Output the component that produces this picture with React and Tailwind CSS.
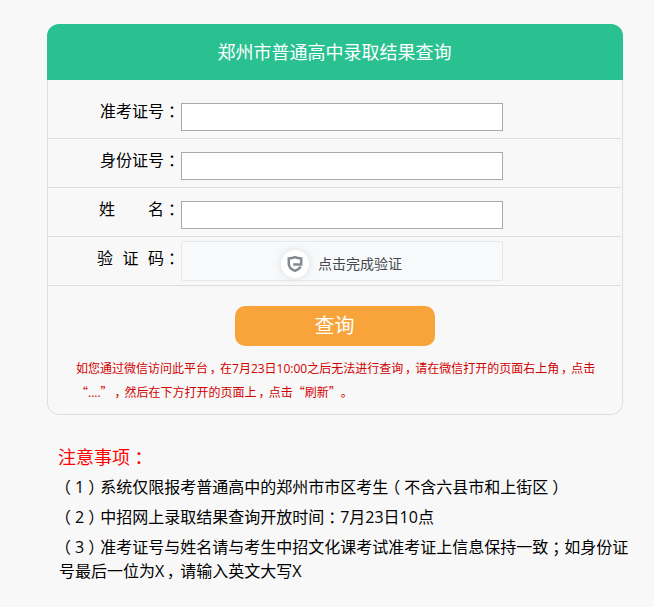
import React from 'react';

// Full-width punctuation, placed in a cell of one em.
const Mark = ({ children, className = 'text-center' }) => (
  <span className={`inline-block w-[1em] font-['Noto_Sans_CJK_SC',sans-serif] leading-none [font-feature-settings:'halt'] ${className}`}>{children}</span>
);

const Comma = () => <Mark className="pl-[0.15em] text-left">，</Mark>;

function Row({ label, width, height = 'h-[49px]', children }) {
  return (
    <div className={`mr-px flex items-end border-b border-[#dddddd] ${height}`}>
      <div className="mb-[15px] flex h-6 w-[132px] justify-end text-[16px] leading-6 whitespace-nowrap">
        <span className={`flex justify-between ${width}`}>
          {label.map((part) => <span key={part}>{part}</span>)}
        </span>
        <span className="w-4"><Mark>：</Mark></span>
      </div>
      {children}
    </div>
  );
}

const Field = () => (
  <input className="mb-[7px] ml-px h-7 w-[322px] border border-[#a9a9a9] bg-white px-1 outline-none" />
);

export default function App() {
  return (
    <div className="h-[607px] w-[654px] overflow-hidden bg-[#f8f8f8] pt-6 font-['Open_Sans','Noto_Sans_CJK_SC',sans-serif] text-black">
      <section className="ml-[47px] h-[391px] w-[576px] overflow-hidden rounded-xl">
        <h1 className="h-14 bg-[#2ac191] pr-px text-center text-[18px] leading-[56px] text-white">郑州市普通高中录取结果查询</h1>
        <div className="h-[335px] rounded-b-xl border border-t-0 border-[#dddddd] bg-[#f8f8f8]">
          <Row label={['准考证号']} width="w-16" height="h-[59px]"><Field /></Row>
          <Row label={['身份证号']} width="w-16"><Field /></Row>
          <Row label={['姓', '名']} width="w-[65px]"><Field /></Row>
          <Row label={['验', '证', '码']} width="w-[67px]">
            <div className="mb-1 ml-px flex h-10 w-[322px] items-center rounded-[2px] border border-[#e4e7eb] bg-[#f7f9fa] pt-[5px] pl-[99px] text-[14px] text-[#45494c]">
              <span className="flex size-7 items-center justify-center rounded-full bg-white shadow-[0_0_7px_1px_#dfe3e6]">
                <svg className="mr-px h-[18px] w-4" viewBox="0 0 16 18" fill="none" stroke="#848a92" strokeWidth="2.5">
                  <path d="M6.2 9.4H14.2V3.4C12 3.3 10 3 8 2.2 6 3 4 3.3 1.8 3.4V9c0 3.2 2.6 5.4 6.2 6.9 2.9-1.2 4.8-2.6 5.7-4.3" />
                </svg>
              </span>
              <span className="ml-[9px]">点击完成验证</span>
            </div>
          </Row>
          <button className="mt-5 ml-[187px] block h-10 w-[200px] rounded-[10px] bg-[#f9a43a] pr-px text-[20px] leading-10 text-white">查询</button>
          <p className="mt-[11px] ml-7 text-[12px] leading-6 whitespace-nowrap text-[#d10000]">
            如您通过微信访问此平台<Comma />在7月23日10:00之后无法进行查询<Comma />请在微信打开的页面右上角<Comma />点击<br />
            <Mark className="text-right">“</Mark>....<Mark className="text-left">”</Mark><Comma />然后在下方打开的页面上<Comma />点击<Mark className="text-right">“</Mark>刷新<Mark className="text-left">”</Mark><Mark className="text-left">。</Mark>
          </p>
        </div>
      </section>
      <section className="mt-[29px] ml-[58px] text-[16px] leading-6 whitespace-nowrap">
        <h2 className="mb-[5px] text-[18px] leading-[26px] text-[#ff0000]">注意事项<Mark>：</Mark></h2>
        <p className="mb-1.5 pl-px"><Mark>（</Mark>1<Mark>）</Mark>系统仅限报考普通高中的郑州市市区考生<Mark>（</Mark>不含六县市和上街区<Mark>）</Mark></p>
        <p className="mb-1.5 pl-px"><Mark>（</Mark>2<Mark>）</Mark>中招网上录取结果查询开放时间<Mark>：</Mark>7月23日10点</p>
        <p className="pl-px -indent-0"><Mark>（</Mark>3<Mark>）</Mark>准考证号与姓名请与考生中招文化课考试准考证上信息保持一致<Mark>；</Mark>如身份证<br />号最后一位为X<Comma />请输入英文大写X</p>
      </section>
    </div>
  );
}
